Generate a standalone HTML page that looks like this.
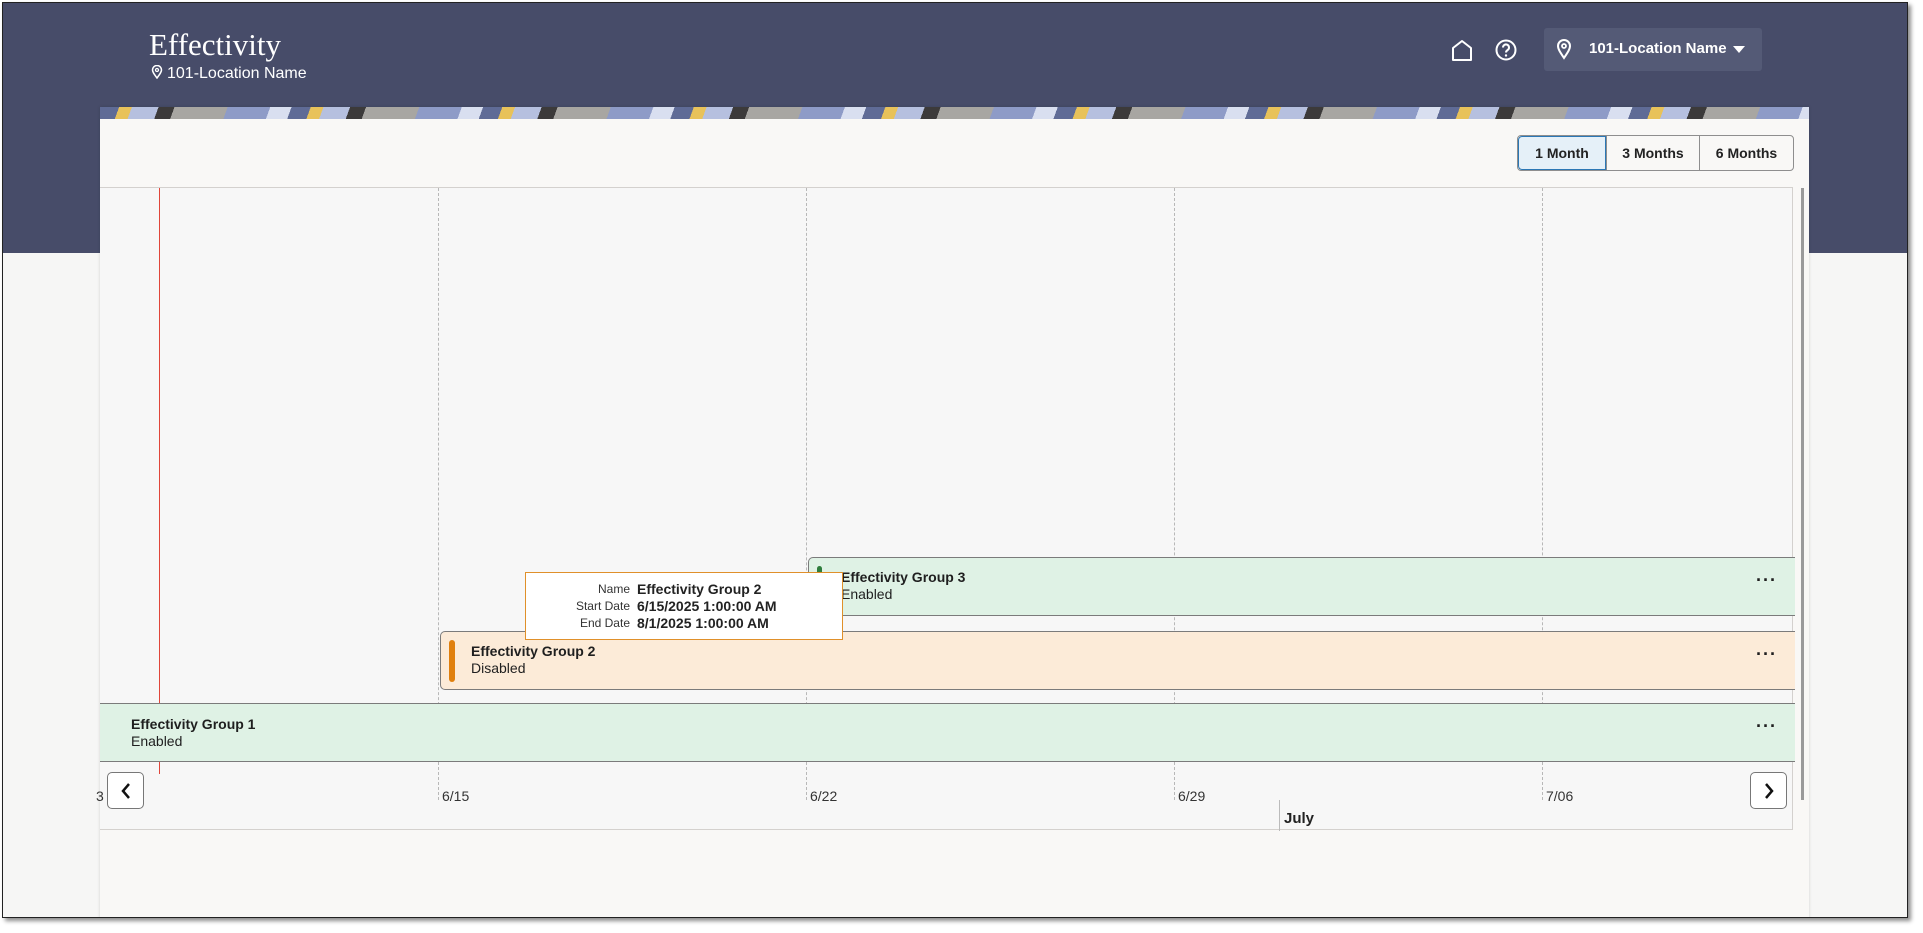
<!DOCTYPE html>
<html><head><meta charset="utf-8"><style>
*{box-sizing:border-box;margin:0;padding:0}
body{width:1923px;height:933px;overflow:hidden;background:#fff;font-family:"Liberation Sans",sans-serif;position:relative}
.frame{position:absolute;left:2px;top:2px;width:1906px;height:916px;border:1px solid #222;background:#f6f6f5;box-shadow:3px 3px 4px rgba(0,0,0,.45);overflow:hidden}
.hdr{position:absolute;left:0;top:0;width:100%;height:250px;background:#474c69}
.a{position:absolute}
.title{left:146px;top:24px;font-family:"Liberation Serif",serif;font-size:31px;color:#fff}
.sub{left:148px;top:62px;font-size:16px;color:#fff}
.loc{left:1541px;top:25px;width:218px;height:43px;background:#545a76;border-radius:3px;color:#fff;font-size:15px;font-weight:bold}
.card{left:97px;top:104px;width:1709px;height:820px;background:#f9f8f6;box-shadow:0 0 3px rgba(0,0,0,.15)}
.banner{left:0;top:0;width:100%;height:12px;background:repeating-linear-gradient(110deg,#5f6b96 0 18px,#e8c25a 18px 30px,#b6c0df 30px 55px,#3c3a3a 55px 70px,#a8a6a2 70px 120px,#8e9bc7 120px 160px,#d9dff0 160px 180px)}
.btns{left:1417px;top:28px;height:36px;display:flex;border:1px solid #8e8e8e;border-radius:4px;overflow:hidden;font-size:14px;font-weight:bold;color:#222}
.btns div{display:flex;align-items:center;justify-content:center;border-left:1px solid #8e8e8e}
.chart{left:0;top:80px;width:1693px;height:643px;border:1px solid #d4d1ce;border-left:none;background:#f7f7f7}
.dash{width:0;border-left:1px dashed #b8b8b8;top:0;height:612px}
.bar{border:1.5px solid #7b7b7b;border-radius:5px;height:59px;font-size:14px;color:#1f1f1f;line-height:17px}
.bar b{display:block;font-weight:bold}
.dots{position:absolute;right:18px;top:14px;font-size:18px;font-weight:bold;letter-spacing:1px}
.lbl{font-size:14px;color:#333;top:600px}
.nav{width:37px;height:37px;border:1px solid #777;border-radius:5px;background:#fff;display:flex;align-items:center;justify-content:center}
</style></head><body>
<div class="frame">
<div class="hdr">
<div class="a title">Effectivity</div>
<div class="a sub"><svg width="12" height="14" viewBox="0 0 12 14" style="vertical-align:-1px;margin-right:4px"><path d="M6 13C3 9 1.5 7 1.5 5a4.5 4.5 0 019 0c0 2-1.5 4-4.5 8z" fill="none" stroke="#fff" stroke-width="1.5"/><circle cx="6" cy="5" r="1.5" fill="none" stroke="#fff" stroke-width="1.3"/></svg>101-Location Name</div>
<svg class="a" style="left:1447px;top:35px" width="24" height="24" viewBox="0 0 24 24"><path d="M3 22V10l9-7 9 7v12z" fill="none" stroke="#fff" stroke-width="2" stroke-linejoin="round"/></svg>
<svg class="a" style="left:1491px;top:35px" width="24" height="24" viewBox="0 0 24 24"><circle cx="12" cy="12" r="9.5" fill="none" stroke="#fff" stroke-width="2"/><path d="M9 9.5a3 3 0 115 2.2c-1.2.8-2 1.3-2 2.8" fill="none" stroke="#fff" stroke-width="2"/><circle cx="12" cy="17.5" r="1.2" fill="#fff"/></svg>
<div class="a loc"><svg class="a" style="left:12px;top:10px" width="16" height="22" viewBox="0 0 16 22"><path d="M8 20C4 14 2 11 2 8a6 6 0 0112 0c0 3-2 6-6 12z" fill="none" stroke="#fff" stroke-width="2"/><circle cx="8" cy="8" r="2" fill="none" stroke="#fff" stroke-width="1.8"/></svg><span class="a" style="left:45px;top:12px">101-Location Name</span><svg class="a" style="left:189px;top:18px" width="12" height="7"><path d="M0 0h12L6 7z" fill="#fff"/></svg></div>
</div>
<div class="a card">
<div class="a banner"></div>
<div class="a btns"><div style="width:88px;background:#e5f0f8;border:1px solid #2b77b5;border-radius:4px 0 0 4px">1 Month</div><div style="width:93px">3 Months</div><div style="width:94px">6 Months</div></div>
<div class="a chart">
<div class="a" style="left:59px;top:0;width:1px;height:586px;background:#e0463a"></div>
<div class="a dash" style="left:338px"></div>
<div class="a dash" style="left:706px"></div>
<div class="a dash" style="left:1074px"></div>
<div class="a dash" style="left:1442px"></div>
<div class="a bar" style="left:708px;top:369px;width:987px;background:#dff2e5;padding:11px 0 0 32px;border-right:none;border-radius:5px 0 0 5px"><div class="a" style="left:8px;top:8px;width:5px;height:12px;background:#2e7d3c;border-radius:3px"></div><b>Effectivity Group 3</b>Enabled<span class="dots">···</span></div>
<div class="a bar" style="left:340px;top:443px;width:1355px;background:#fcebd8;padding:11px 0 0 30px;border-right:none;border-radius:5px 0 0 5px"><div class="a" style="left:8px;top:8px;width:6px;height:42px;background:#e0800e;border-radius:3px"></div><b>Effectivity Group 2</b>Disabled<span class="dots">···</span></div>
<div class="a bar" style="left:0;top:515px;width:1695px;background:#dff2e5;padding:12px 0 0 31px;border-left:none;border-right:none;border-radius:0"><b>Effectivity Group 1</b>Enabled<span class="dots">···</span></div>
<div class="a" style="left:425px;top:384px;width:318px;height:68px;background:#fff;border:1px solid #e0902a;font-size:14px;line-height:17px;padding-top:8px">
<div class="a" style="left:0;top:8px;width:104px;text-align:right;font-size:12px;line-height:17px;color:#333">Name<br>Start Date<br>End Date</div>
<div class="a" style="left:111px;top:8px;font-weight:bold;color:#222">Effectivity Group 2<br>6/15/2025 1:00:00 AM<br>8/1/2025 1:00:00 AM</div></div>
<div class="a lbl" style="left:-4px">3</div>
<div class="a lbl" style="left:342px">6/15</div>
<div class="a lbl" style="left:710px">6/22</div>
<div class="a lbl" style="left:1078px">6/29</div>
<div class="a lbl" style="left:1446px">7/06</div>
<div class="a" style="left:1179px;top:612px;width:1px;height:31px;background:#bbb"></div>
<div class="a" style="left:1184px;top:622px;font-size:15px;font-weight:bold;color:#222">July</div>
<div class="a nav" style="left:7px;top:584px"><svg width="12" height="18"><path d="M9 2L3 9l6 7" fill="none" stroke="#111" stroke-width="2.5"/></svg></div>
<div class="a nav" style="left:1650px;top:584px"><svg width="12" height="18"><path d="M3 2l6 7-6 7" fill="none" stroke="#111" stroke-width="2.5"/></svg></div>
</div>
<div class="a" style="left:1701px;top:81px;width:3px;height:612px;background:#9a9a9a"></div>
</div>
</div>
</body></html>
